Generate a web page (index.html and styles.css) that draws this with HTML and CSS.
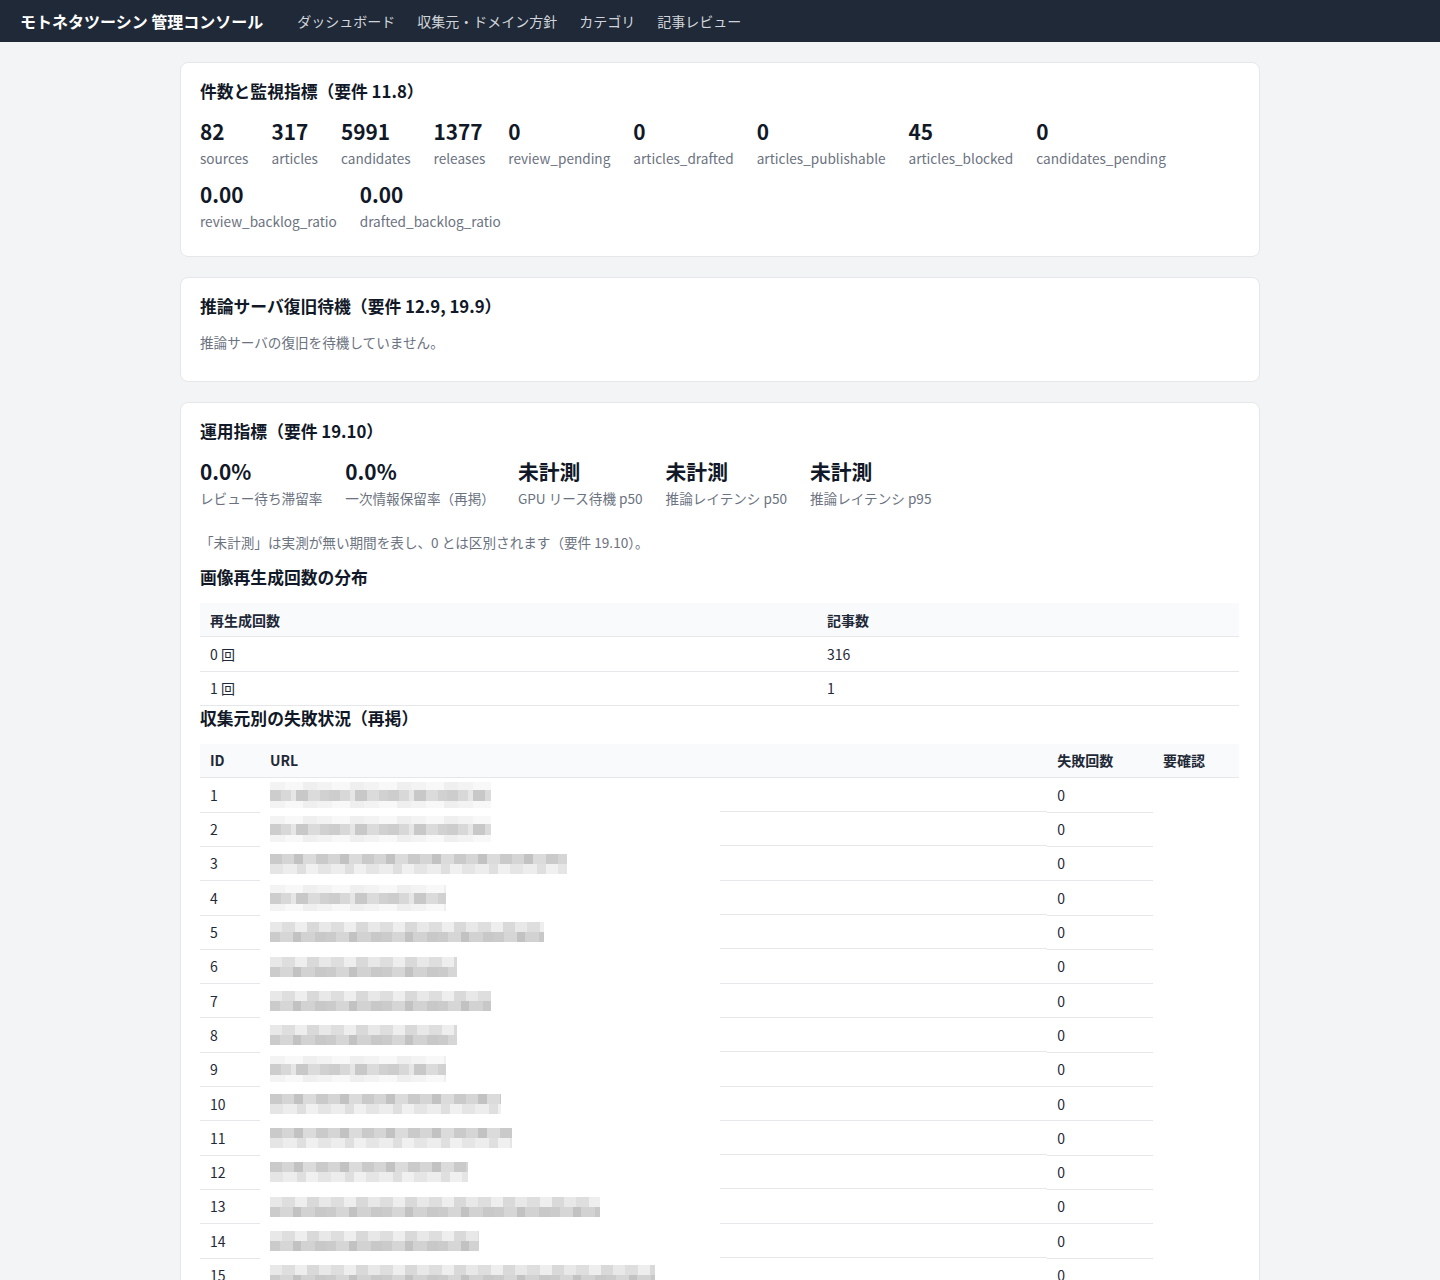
FILE: index.html
```html
<!DOCTYPE html>
<html lang="ja">
<head>
<meta charset="utf-8">
<title>モトネタツーシン 管理コンソール</title>
<link rel="stylesheet" href="styles.css">
</head>
<body>
<header class="topbar">
  <div class="brand">モトネタツーシン 管理コンソール</div>
  <nav class="nav">
    <a href="#">ダッシュボード</a>
    <a href="#">収集元・ドメイン方針</a>
    <a href="#">カテゴリ</a>
    <a href="#">記事レビュー</a>
  </nav>
</header>
<main class="main">
  <section class="card">
    <h2>件数と監視指標（要件 11.8）</h2>
    <div class="metrics metrics-counts">
      <div class="metric"><div class="num">82</div><div class="lbl">sources</div></div>
      <div class="metric"><div class="num">317</div><div class="lbl">articles</div></div>
      <div class="metric"><div class="num">5991</div><div class="lbl">candidates</div></div>
      <div class="metric"><div class="num">1377</div><div class="lbl">releases</div></div>
      <div class="metric"><div class="num">0</div><div class="lbl">review_pending</div></div>
      <div class="metric"><div class="num">0</div><div class="lbl">articles_drafted</div></div>
      <div class="metric"><div class="num">0</div><div class="lbl">articles_publishable</div></div>
      <div class="metric"><div class="num">45</div><div class="lbl">articles_blocked</div></div>
      <div class="metric"><div class="num">0</div><div class="lbl">candidates_pending</div></div>
      <div class="metric"><div class="num">0.00</div><div class="lbl">review_backlog_ratio</div></div>
      <div class="metric"><div class="num">0.00</div><div class="lbl">drafted_backlog_ratio</div></div>
    </div>
  </section>

  <section class="card">
    <h2>推論サーバ復旧待機（要件 12.9, 19.9）</h2>
    <p class="muted">推論サーバの復旧を待機していません。</p>
  </section>

  <section class="card">
    <h2>運用指標（要件 19.10）</h2>
    <div class="metrics">
      <div class="metric"><div class="num">0.0%</div><div class="lbl">レビュー待ち滞留率</div></div>
      <div class="metric"><div class="num">0.0%</div><div class="lbl">一次情報保留率（再掲）</div></div>
      <div class="metric"><div class="num">未計測</div><div class="lbl">GPU リース待機 p50</div></div>
      <div class="metric"><div class="num">未計測</div><div class="lbl">推論レイテンシ p50</div></div>
      <div class="metric"><div class="num">未計測</div><div class="lbl">推論レイテンシ p95</div></div>
    </div>
    <p class="note">「未計測」は実測が無い期間を表し、0 とは区別されます（要件 19.10）。</p>

    <h3>画像再生成回数の分布</h3>
    <table class="tbl">
      <thead>
        <tr><th class="c-regen">再生成回数</th><th>記事数</th></tr>
      </thead>
      <tbody>
        <tr><td>0 回</td><td>316</td></tr>
        <tr><td>1 回</td><td>1</td></tr>
      </tbody>
    </table>

    <h3>収集元別の失敗状況（再掲）</h3>
    <table class="tbl tbl-src">
      <thead>
        <tr><th class="c-id">ID</th><th class="c-url">URL</th><th class="c-fail">失敗回数</th><th class="c-chk">要確認</th></tr>
      </thead>
      <tbody>
        <tr><td>1</td><td class="url"><div class="mosaic ma" style="width:221px"></div></td><td>0</td></tr>
        <tr><td>2</td><td class="url"><div class="mosaic ma" style="width:221px"></div></td><td>0</td></tr>
        <tr><td>3</td><td class="url"><div class="mosaic mc" style="width:297px"></div></td><td>0</td></tr>
        <tr><td>4</td><td class="url"><div class="mosaic ma" style="width:176px"></div></td><td>0</td></tr>
        <tr><td>5</td><td class="url"><div class="mosaic mb" style="width:274px"></div></td><td>0</td></tr>
        <tr><td>6</td><td class="url"><div class="mosaic mb" style="width:187px"></div></td><td>0</td></tr>
        <tr><td>7</td><td class="url"><div class="mosaic mb" style="width:221px"></div></td><td>0</td></tr>
        <tr><td>8</td><td class="url"><div class="mosaic mb" style="width:187px"></div></td><td>0</td></tr>
        <tr><td>9</td><td class="url"><div class="mosaic ma" style="width:176px"></div></td><td>0</td></tr>
        <tr><td>10</td><td class="url"><div class="mosaic mc" style="width:231px"></div></td><td>0</td></tr>
        <tr><td>11</td><td class="url"><div class="mosaic mc" style="width:242px"></div></td><td>0</td></tr>
        <tr><td>12</td><td class="url"><div class="mosaic mc" style="width:198px"></div></td><td>0</td></tr>
        <tr><td>13</td><td class="url"><div class="mosaic mb" style="width:330px"></div></td><td>0</td></tr>
        <tr><td>14</td><td class="url"><div class="mosaic mb" style="width:209px"></div></td><td>0</td></tr>
        <tr><td>15</td><td class="url"><div class="mosaic mb" style="width:385px"></div></td><td>0</td></tr>
      </tbody>
    </table>
  </section>
</main>
</body>
</html>
```

FILE: styles.css
```css
* { box-sizing: border-box; }

html, body {
  margin: 0;
  padding: 0;
}

body {
  background: #f3f4f6;
  color: #1f2937;
  font-family: "Noto Sans CJK JP", "Noto Sans", sans-serif;
  font-size: 14px;
}

.topbar {
  height: 42px;
  background: #1f2937;
  display: flex;
  align-items: center;
  padding: 0 20px;
  gap: 34px;
}

.brand {
  color: #ffffff;
  font-weight: 700;
  font-size: 16px;
  line-height: 20px;
}

.nav {
  display: flex;
  gap: 22px;
}

.nav a {
  color: #d1d5db;
  text-decoration: none;
  font-size: 14px;
  line-height: 20px;
}

.main {
  width: 1080px;
  margin: 20px auto 0;
  display: flex;
  flex-direction: column;
  gap: 20px;
}

.card {
  background: #ffffff;
  border: 1px solid #e5e7eb;
  border-radius: 8px;
  padding: 16px 20px 20px 19px;
}

.card h2 {
  margin: 0 0 14px;
  font-size: 16.8px;
  line-height: 24px;
  font-weight: 700;
  color: #111827;
}

.card h3 {
  margin: 0 0 14px;
  font-size: 16.8px;
  line-height: 24px;
  font-weight: 700;
  color: #111827;
}

.metrics {
  display: flex;
  flex-wrap: wrap;
  gap: 12px 23px;
}

.metrics-counts {
  margin-bottom: 5px;
}

.num {
  font-size: 20.8px;
  line-height: 28px;
  font-weight: 700;
  color: #111827;
}

.lbl {
  margin-top: 3px;
  font-size: 13.6px;
  line-height: 20px;
  color: #6b7280;
}

.muted {
  margin: 0 0 9px;
  font-size: 13.6px;
  line-height: 20px;
  color: #6b7280;
}

.note {
  margin: 24px 0 13px;
  font-size: 13.6px;
  line-height: 20px;
  color: #6b7280;
}

.tbl {
  width: 100%;
  border-collapse: collapse;
  font-size: 14px;
}

.tbl th,
.tbl td {
  text-align: left;
  padding: 6.5px 10px;
  line-height: 20.3px;
  border-bottom: 1px solid #e5e7eb;
  vertical-align: middle;
}

.tbl th {
  background: #f9fafb;
  font-weight: 700;
  color: #1f2937;
}

.tbl td {
  color: #1f2937;
}

.c-regen { width: 617px; }

.c-id { width: 60px; }
.c-url { width: 788px; }
.c-fail { width: 106px; }
.c-chk { width: 86px; }

.tbl-src td.url {
  border-bottom: none;
  background: linear-gradient(#e5e7eb, #e5e7eb) no-repeat right bottom / calc(100% - 460px) 1px;
  padding-top: 4px;
  padding-bottom: 4px;
}

.mosaic {
  height: 26px;
}

.mosaic.ma {
  background:
    repeating-linear-gradient(90deg, #cdcdcd 0 11px, #d8d8d8 11px 21px, #e6e6e6 21px 26px, #c8c8c8 26px 38px, #dbdbdb 38px 50px, #d1d1d1 50px 59px) 0 8px / 100% 11px no-repeat,
    repeating-linear-gradient(90deg, #f3f3f3 0 15px, #f8f8f8 15px 33px, #efefef 33px 47px) 0 0 / 100% 26px no-repeat;
}

.mosaic.mb {
  background:
    repeating-linear-gradient(90deg, #e8e8e8 0 12px, #dedede 12px 25px, #eeeeee 25px 37px, #d9d9d9 37px 49px) 0 3px / 100% 10px no-repeat,
    repeating-linear-gradient(90deg, #cbcbcb 0 10px, #d6d6d6 10px 23px, #c2c2c2 23px 31px, #d2d2d2 31px 45px, #c8c8c8 45px 56px) 0 13px / 100% 10px no-repeat;
}

.mosaic.mc {
  background:
    repeating-linear-gradient(90deg, #cacaca 0 12px, #d5d5d5 12px 24px, #c2c2c2 24px 33px, #dbdbdb 33px 46px) 0 3px / 100% 10px no-repeat,
    repeating-linear-gradient(90deg, #e5e5e5 0 13px, #ededed 13px 27px, #dfdfdf 27px 36px, #f0f0f0 36px 48px) 0 13px / 100% 10px no-repeat;
}
```
